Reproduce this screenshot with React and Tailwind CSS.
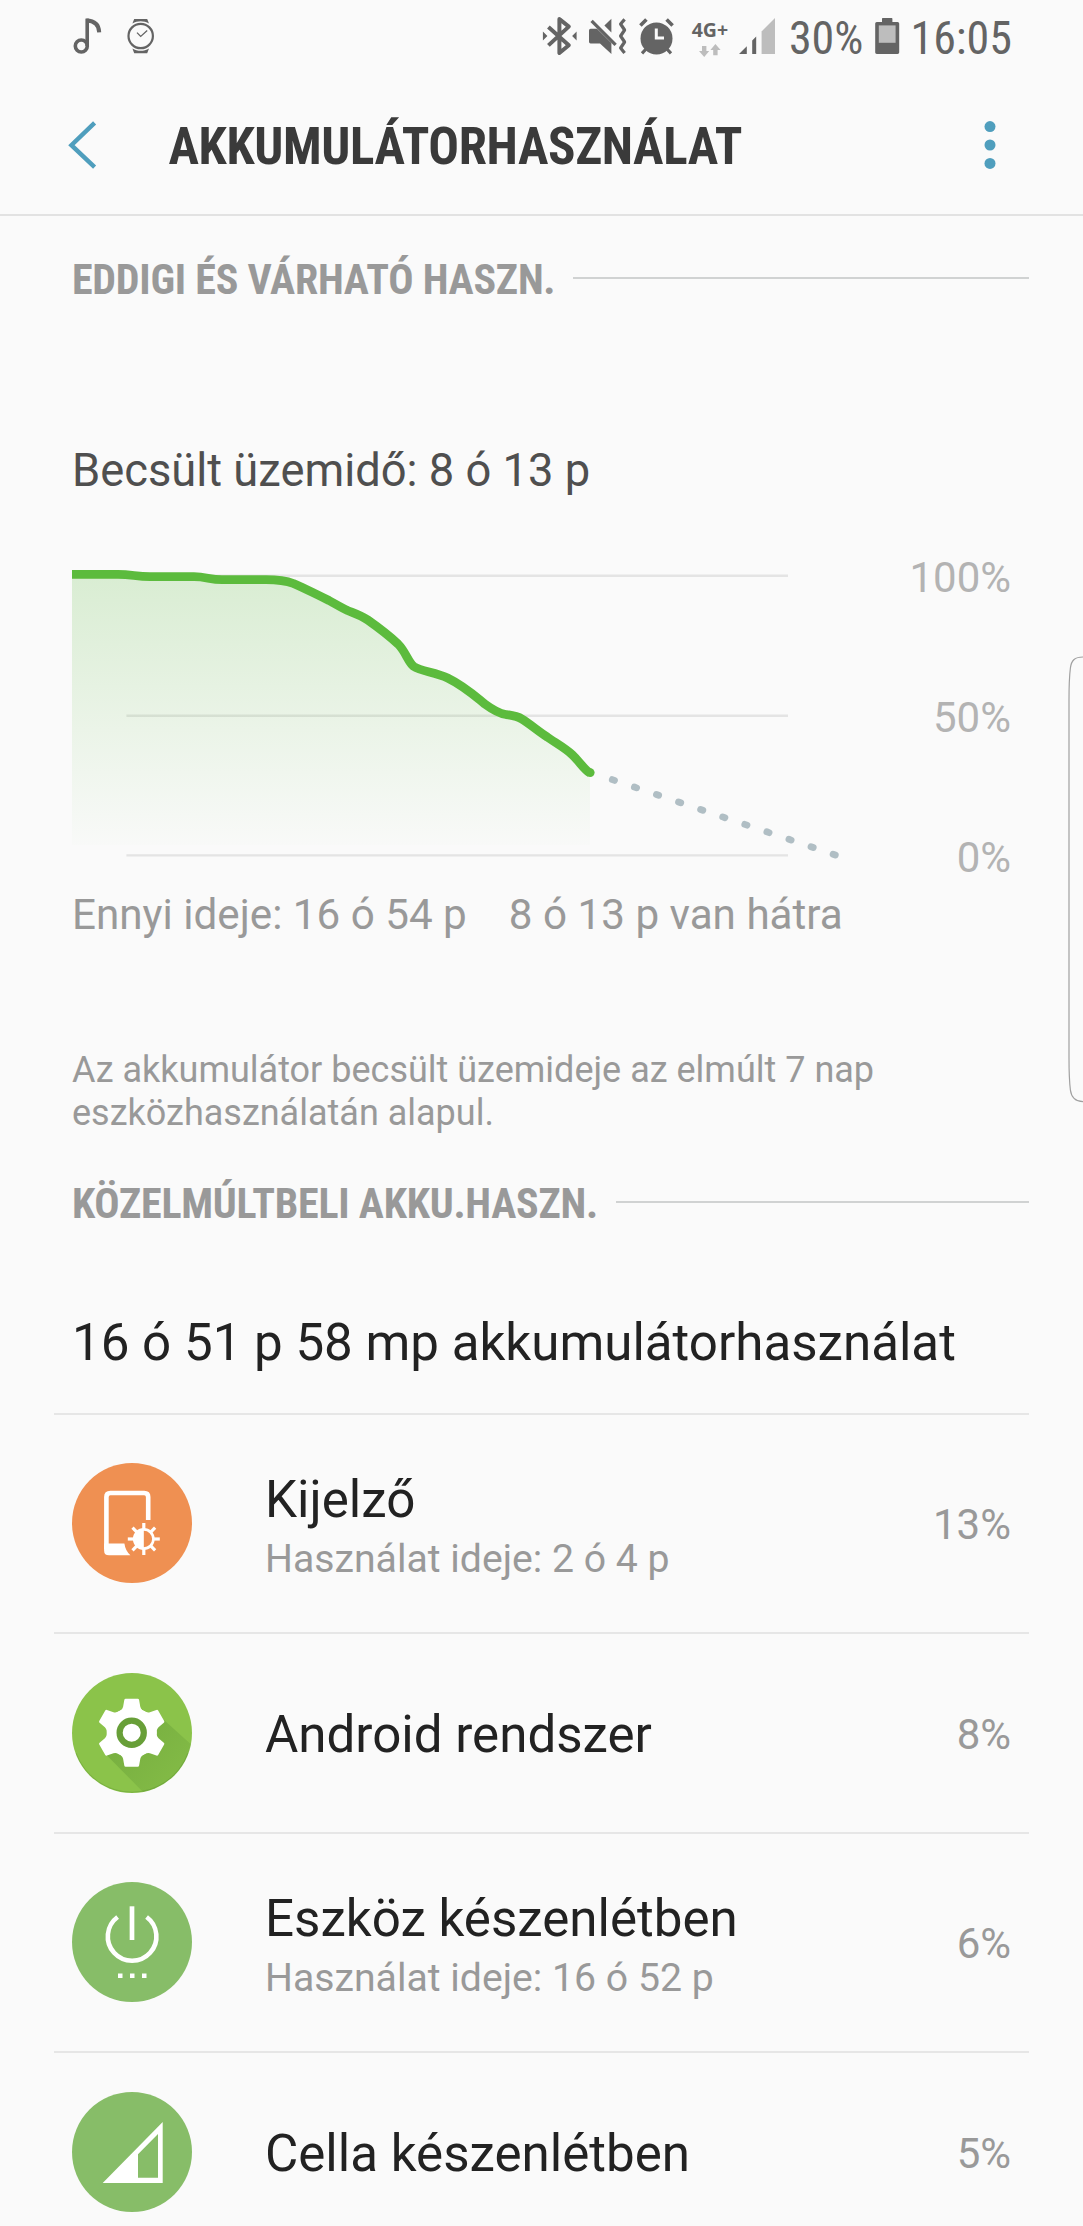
import React from 'react';

const condensed = "font-['Roboto_Condensed','Roboto',sans-serif]";

// Battery level history, in chart coordinates
const LEVEL_LINE =
  'M0 34.3 H46 C60 34.3 64 36.7 78 36.7 H122 C134 36.7 138 39.7 150 39.7 H194 C204 39.7 212 40 221.4 43.5 ' +
  'C232 48 244 54 257 60.5 C263.5 64 269 67.5 275.6 70.5 C283 73.5 289 75.4 295.8 80 C305 86.5 318 96.5 326 104 ' +
  'C334 112 336 122 341.8 126.5 C349 131.5 363 132 375.6 138 C392 146 403 156 412.8 164 C421 170 427 173.5 433.8 174.5 ' +
  'C441 175.5 445 176 449.8 179 C458 184 466 191 475.2 197 C483 202.5 493 208 500 214.5 C508 222 512 229.5 518 233';

const FORECAST = Array.from({ length: 11 }, (_, i) => ({ x: 541.4 + i * 22.08, y: 240 + i * 7.46 }));

function NoteIcon() {
  return (
    <svg width="30" height="44" viewBox="0 0 30 44" fill="none" stroke="#646464" strokeWidth="3.6">
      <circle cx="8.3" cy="30" r="6" />
      <path d="M14.2 30 V2.6" />
      <path d="M13.4 4.4 C21.4 4.6 26 8.4 26.2 16.4" strokeWidth="4" />
    </svg>
  );
}

function WatchIcon() {
  return (
    <svg width="28" height="44" viewBox="0 0 28 44" fill="none" stroke="#646464">
      <circle cx="13.7" cy="20" r="12.2" strokeWidth="2.2" />
      <path d="M10 16.6 L13.7 20.4 L20.2 14.6" strokeWidth="1.3" />
      <path d="M5.4 7.6 L7.2 3 H20.2 L22 7.6 C17 4.4 10.4 4.4 5.4 7.6 Z" fill="#646464" stroke="none" />
      <path d="M5.4 32.4 L7.2 37.2 H20.2 L22 32.4 C17 35.6 10.4 35.6 5.4 32.4 Z" fill="#646464" stroke="none" />
    </svg>
  );
}

function BluetoothIcon() {
  return (
    <svg width="36" height="44" viewBox="0 0 36 44" fill="none">
      <path d="M6.4 11 L26.8 29.2 L17.4 37 V3 L26.8 10.6 L6.4 29.4" stroke="#646464" strokeWidth="4" strokeLinejoin="round" />
      <path d="M.9 15.6 L5.4 20 L.9 24.4 Z M34.6 15.6 L30.1 20 L34.6 24.4 Z" fill="#646464" />
    </svg>
  );
}

function MuteIcon() {
  return (
    <svg width="38" height="44" viewBox="0 0 38 44" fill="none">
      <path d="M1.6 12.8 H8 L22.4 27 V38 L11 27.4 H1.6 Q0 27.4 0 25.8 V14.4 Q0 12.8 1.6 12.8 Z" fill="#646464" />
      <path d="M22.4 2.8 V16.4 L15.4 9.6 Z" fill="#646464" />
      <path d="M2.6 4.8 L26.6 28.8" stroke="#646464" strokeWidth="3.2" />
      <path d="M35.6 3.4 L31.6 8 L35.6 14 L31.6 20 L35.6 26 L31.6 32 L35.6 37" stroke="#646464" strokeWidth="3.2" strokeLinejoin="round" />
    </svg>
  );
}

function AlarmIcon() {
  return (
    <svg width="36" height="44" viewBox="0 0 36 44" fill="none">
      <circle cx="17.5" cy="22.4" r="16" fill="#646464" />
      <path d="M1.4 9.6 L7.4 3.6 M33.6 9.6 L27.6 3.6" stroke="#646464" strokeWidth="3.6" />
      <path d="M3 37.4 L8 32 M32 37.4 L27 32" stroke="#646464" strokeWidth="3.2" />
      <path d="M17.3 12.6 V22 H25" stroke="#fafafa" strokeWidth="3" />
    </svg>
  );
}

function NetworkType() {
  return (
    <div className="flex w-[40px] flex-col items-center">
      <span className="font-['Noto_Sans',sans-serif] text-[19.5px] leading-[22px] font-bold">4G+</span>
      <svg width="22" height="13" viewBox="0 0 22 13" className="mt-[3px]" fill="#bdbdbd">
        <path d="M3 2 H7.4 V7 H10.2 L5.2 13 L0 7 H3 Z" />
        <path d="M14.2 11.2 H18.6 V6 H21.6 L16.4 0 L11.4 6 H14.2 Z" />
      </svg>
    </div>
  );
}

function SignalIcon() {
  return (
    <svg width="37" height="44" viewBox="0 0 37 44">
      <path d="M0 38 L7.8 30.2 V38 Z M13.2 24.4 L17.2 20.4 V38 H13.2 Z" fill="#646464" />
      <path d="M22.6 15.4 L36 2 V38 H22.6 Z" fill="#bdbdbd" />
    </svg>
  );
}

function BatteryIcon() {
  return (
    <svg width="25" height="44" viewBox="0 0 25 44">
      <path d="M7 2.4 Q7 2 7.6 2 H16.8 Q17.4 2 17.4 2.4 V6 H22.6 Q24.2 6 24.2 7.6 V36.6 Q24.2 38 22.6 38 H1.8 Q.2 38 .2 36.6 V7.6 Q.2 6 1.8 6 H7 Z" fill="#646464" />
      <path d="M3.8 9.4 H20.6 V26.8 H3.8 Z" fill="#bdbdbd" />
    </svg>
  );
}

function StatusBar() {
  return (
    <div className="flex h-[76px] items-center pr-[71px] pl-[73px] text-[#646464]">
      <NoteIcon />
      <div className="ml-[24px]"><WatchIcon /></div>
      <div className="ml-auto flex items-center">
        <BluetoothIcon />
        <div className="ml-[11px]"><MuteIcon /></div>
        <div className="ml-[12px]"><AlarmIcon /></div>
        <div className="ml-[15px]"><NetworkType /></div>
        <div className="ml-[9px]"><SignalIcon /></div>
        <span className={`ml-[13px] text-[46px] leading-[76px] ${condensed}`}>30%</span>
        <div className="ml-[12px]"><BatteryIcon /></div>
        <span className={`ml-[10px] text-[46px] leading-[76px] ${condensed}`}>16:05</span>
      </div>
    </div>
  );
}

function Header() {
  return (
    <header className="flex h-[140px] items-center border-b-2 border-[#e2e2e2] pl-[68px]">
      <svg width="30" height="50" viewBox="0 0 30 50" fill="none" stroke="#4f9ebd" strokeWidth="4.4">
        <path d="M26.6 2.8 L3.4 25.2 L26.6 47.2" />
      </svg>
      <h1 className={`mt-[4px] ml-[70.5px] text-[51px] leading-[60px] font-bold tracking-[-0.37px] text-[#3a3a3a] ${condensed}`}>
        AKKUMULÁTORHASZNÁLAT
      </h1>
      <svg width="12" height="50" viewBox="0 0 12 50" fill="#4f9ebd" className="mr-[87px] ml-auto">
        <circle cx="6" cy="6.6" r="5.5" />
        <circle cx="6" cy="25" r="5.5" />
        <circle cx="6" cy="43.4" r="5.5" />
      </svg>
    </header>
  );
}

function SectionTitle({ children }) {
  return (
    <div className="flex h-[60px] items-center pr-[54px] pl-[72px]">
      <h2 className={`text-[42px] leading-[60px] font-bold tracking-[-0.24px] whitespace-nowrap text-[#999] ${condensed}`}>
        {children}
      </h2>
      <div className="mb-[4px] ml-[18px] h-[2px] flex-1 bg-[#d0d2d2]" />
    </div>
  );
}

function UsageChart() {
  return (
    <div className="flex h-[348px] justify-between pr-[72px] pl-[72px]">
      <svg width="780" height="340" viewBox="0 0 780 340" fill="none">
        <defs>
          <linearGradient id="level" x1="0" y1="34" x2="0" y2="318" gradientUnits="userSpaceOnUse">
            <stop offset="0" stopColor="#5cbb3d" stopOpacity=".21" />
            <stop offset="1" stopColor="#5cbb3d" stopOpacity="0" />
          </linearGradient>
        </defs>
        <path d="M54.4 35.8 H716 M54.4 175.7 H716 M54.4 315.4 H716" stroke="#e4e4e4" strokeWidth="2.4" />
        <path d={`${LEVEL_LINE} V305 H0 Z`} fill="url(#level)" />
        <path d={LEVEL_LINE} stroke="#5cbb3d" strokeWidth="8.8" />
        <circle cx="518.2" cy="232.6" r="4.4" fill="#5cbb3d" />
        {FORECAST.map((p) => (
          <path key={p.x} d={`M${p.x - 1.1} ${p.y - 0.4} l2.2 .8`} stroke="#b0bec4" strokeWidth="6.8" strokeLinecap="round" />
        ))}
      </svg>
      <div className="flex flex-col gap-20 pt-2 text-right text-[42px] leading-[60px] text-[#b3b3b3]">
        <span>100%</span>
        <span>50%</span>
        <span>0%</span>
      </div>
    </div>
  );
}

function DisplayIcon() {
  return (
    <svg width="120" height="120" viewBox="0 0 120 120" fill="none">
      <circle cx="60" cy="60" r="60" fill="#ef9052" />
      <path d="M76.2 57 V34 Q76.2 30 72.2 30 H38.4 Q34.4 30 34.4 34 V86" stroke="#fff" strokeWidth="4.6" />
      <path d="M32.1 80.6 H52.4 Q53.4 88 58.4 92.3 H37 Q32.1 92.3 32.1 87.4 Z" fill="#fff" />
      <circle cx="71.8" cy="76" r="9.6" stroke="#fff" strokeWidth="2.6" />
      <path d="M71.8 66.4 A9.6 9.6 0 0 0 71.8 85.6 Z" fill="#fff" />
      {[0, 45, 90, 135, 180, 225, 270, 315].map((a) => (
        <path key={a} d="M71.8 66.5 V60" stroke="#fff" strokeWidth="3.2" transform={`rotate(${a} 71.8 76)`} />
      ))}
    </svg>
  );
}

function AndroidIcon() {
  return (
    <svg width="120" height="120" viewBox="0 0 120 120">
      <defs>
        <clipPath id="disc"><circle cx="60" cy="60" r="60" /></clipPath>
        <linearGradient id="shade" x1="40" y1="40" x2="105" y2="105" gradientUnits="userSpaceOnUse">
          <stop offset="0" stopColor="#33691e" stopOpacity=".26" />
          <stop offset="1" stopColor="#33691e" stopOpacity=".1" />
        </linearGradient>
      </defs>
      <circle cx="60" cy="60" r="60" fill="#8bc34a" />
      <g clipPath="url(#disc)">
        <path d="M34 81.5 L74 122 H122 V74 L92 47 Z" fill="url(#shade)" />
        <path d="M4 80 A59.6 59.6 0 0 0 116 80" fill="none" stroke="#33691e" strokeOpacity=".2" strokeWidth="1" />
      </g>
      <g transform="translate(59.7 59.7)" fill="#fff">
        <circle r="25" />
        {[0, 60, 120, 180, 240, 300].map((a) => (
          <path key={a} transform={`rotate(${a})`} d="M-14 -20.5 Q-9.6 -22.5 -8.6 -26 L-7.4 -32.8 Q-7.2 -34 -6 -34 H6 Q7.2 -34 7.4 -32.8 L8.6 -26 Q9.6 -22.5 14 -20.5 Z" />
        ))}
        <circle r="12.1" fill="none" stroke="#689f38" strokeWidth="6.2" />
      </g>
    </svg>
  );
}

function StandbyIcon() {
  return (
    <svg width="120" height="120" viewBox="0 0 120 120" fill="none">
      <circle cx="60" cy="60" r="60" fill="#87bd68" />
      <path d="M45.6 35 A24.3 24.3 0 1 0 74.6 35" stroke="#fff" strokeWidth="4.6" />
      <path d="M60 24.3 V58" stroke="#fff" strokeWidth="4.7" />
      <path d="M46 93.8 H50.5 M58 93.8 H62.5 M70 93.8 H74.5" stroke="#fff" strokeWidth="4.4" />
    </svg>
  );
}

function CellIcon() {
  return (
    <svg width="120" height="120" viewBox="0 0 120 120">
      <circle cx="60" cy="60" r="60" fill="#87bd68" />
      <path d="M30.7 91 L90.7 30 V91 Z M66 62.3 V85.7 H86 V42 Z" fill="#fff" fillRule="evenodd" />
    </svg>
  );
}

const items = [
  { name: 'Kijelző', detail: 'Használat ideje: 2 ó 4 p', percent: '13%', Icon: DisplayIcon },
  { name: 'Android rendszer', percent: '8%', Icon: AndroidIcon },
  { name: 'Eszköz készenlétben', detail: 'Használat ideje: 16 ó 52 p', percent: '6%', Icon: StandbyIcon },
  { name: 'Cella készenlétben', percent: '5%', Icon: CellIcon },
];

function UsageRow({ name, detail, percent, Icon }) {
  return (
    <li className={`flex items-center border-t-2 border-[#e6e6e6] pr-[18px] pl-[18px] ${detail ? 'h-[219px]' : 'h-[200px]'}`}>
      <div className="pb-px"><Icon /></div>
      <div className={`ml-[73px] flex-1 ${detail ? 'pt-[9px]' : 'pt-[3px]'}`}>
        <div className="text-[51.1px] leading-[62px] text-[#222]">{name}</div>
        {detail && <div className="text-[39.2px] leading-[57px] text-[#999]">{detail}</div>}
      </div>
      <span className="pt-[3px] text-[42px] leading-[60px] text-[#999]">{percent}</span>
    </li>
  );
}

export default function App() {
  return (
    <div className="relative h-[2226px] w-[1083px] overflow-hidden bg-[#fafafa] font-['Roboto',sans-serif]">
      <StatusBar />
      <Header />
      <main>
        <div className="mt-[34px]"><SectionTitle>EDDIGI ÉS VÁRHATÓ HASZN.</SectionTitle></div>
        <p className="mt-[131px] pl-[72px] text-[45.3px] leading-[60px] text-[#4f4f4f]">Becsült üzemidő: 8 ó 13 p</p>
        <div className="mt-[39px]"><UsageChart /></div>
        <div className="mt-[2px] flex gap-[42px] pl-[72px] text-[42.2px] leading-[50px] text-[#999]">
          <span>Ennyi ideje: 16 ó 54 p</span>
          <span>8 ó 13 p van hátra</span>
        </div>
        <p className="mt-[109px] pl-[72px] text-[36px] leading-[43px] text-[#999]">
          Az akkumulátor becsült üzemideje az elmúlt 7 nap
          <br />
          eszközhasználatán alapul.
        </p>
        <div className="mt-[39px]"><SectionTitle>KÖZELMÚLTBELI AKKU.HASZN.</SectionTitle></div>
        <p className="mt-[78px] pl-[72px] text-[51.1px] leading-[61px] text-[#222]">16 ó 51 p 58 mp akkumulátorhasználat</p>
        <ul className="mt-[40px] mr-[54px] ml-[54px]">
          {items.map((item) => <UsageRow key={item.name} {...item} />)}
        </ul>
      </main>

      {/* Edge panel handle */}
      <svg width="15" height="448" viewBox="0 0 15 448" fill="none" className="absolute top-[656px] right-0">
        <path d="M15 1 C7 1 3.4 4 2.4 12 C1.4 20 1 30 1 44 V402 C1 416 1.4 426 2.4 434 C3.4 442 7 445.6 15 445.6" stroke="#a0a0a0" strokeWidth="1.2" />
      </svg>
    </div>
  );
}
